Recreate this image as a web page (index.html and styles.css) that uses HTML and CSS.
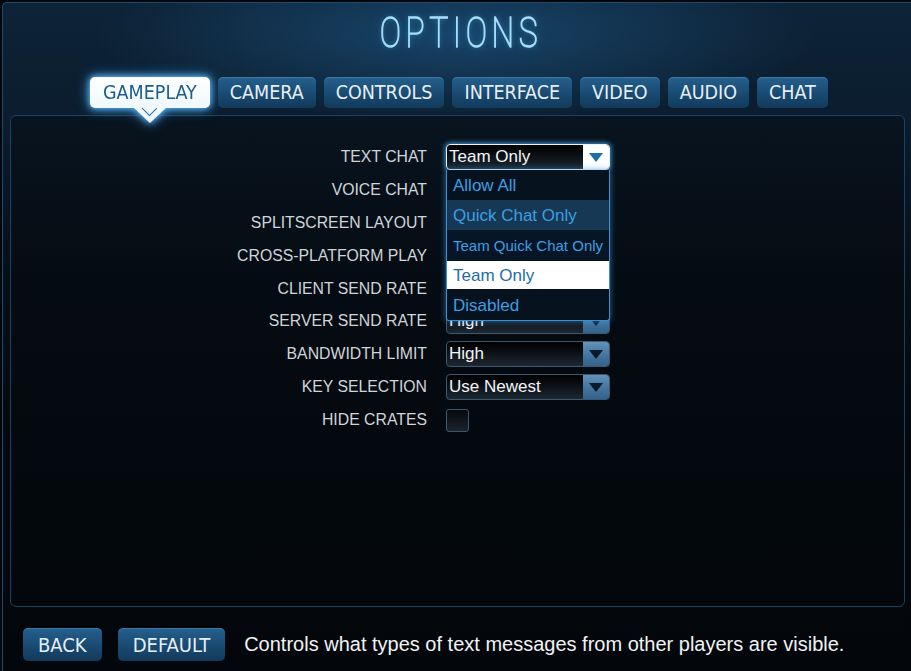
FILE: index.html
```html
<!DOCTYPE html>
<html>
<head>
<meta charset="utf-8">
<title>Options</title>
<link rel="stylesheet" href="styles.css">
</head>
<body>
<div class="frame">
  <header class="title"><h1>OPTIONS</h1></header>
  <nav class="tabs">
    <div class="tab active">GAMEPLAY</div>
    <div class="tab">CAMERA</div>
    <div class="tab">CONTROLS</div>
    <div class="tab">INTERFACE</div>
    <div class="tab">VIDEO</div>
    <div class="tab">AUDIO</div>
    <div class="tab">CHAT</div>
  </nav>
  <section class="panel">
    <div class="rows">
      <div class="row">
        <span class="label">TEXT CHAT</span>
        <div class="select open">
          <span class="val">Team Only</span><span class="arrow"></span>
          <ul class="dropdown">
            <li class="item">Allow All</li>
            <li class="item hover">Quick Chat Only</li>
            <li class="item small">Team Quick Chat Only</li>
            <li class="item selected">Team Only</li>
            <li class="item">Disabled</li>
          </ul>
        </div>
      </div>
      <div class="row"><span class="label">VOICE CHAT</span><div class="select"><span class="val"></span><span class="arrow"></span></div></div>
      <div class="row"><span class="label">SPLITSCREEN LAYOUT</span><div class="select"><span class="val"></span><span class="arrow"></span></div></div>
      <div class="row"><span class="label">CROSS-PLATFORM PLAY</span><div class="check"></div></div>
      <div class="row"><span class="label">CLIENT SEND RATE</span><div class="select"><span class="val"></span><span class="arrow"></span></div></div>
      <div class="row"><span class="label">SERVER SEND RATE</span><div class="select"><span class="val">High</span><span class="arrow"></span></div></div>
      <div class="row"><span class="label">BANDWIDTH LIMIT</span><div class="select"><span class="val">High</span><span class="arrow"></span></div></div>
      <div class="row"><span class="label">KEY SELECTION</span><div class="select"><span class="val">Use Newest</span><span class="arrow"></span></div></div>
      <div class="row"><span class="label">HIDE CRATES</span><div class="check"></div></div>
    </div>
  </section>
  <footer class="footer">
    <div class="btn">BACK</div>
    <div class="btn">DEFAULT</div>
    <p class="desc">Controls what types of text messages from other players are visible.</p>
  </footer>
</div>
</body>
</html>
```
FILE: styles.css
```css
html, body {
  margin: 0;
  padding: 0;
}
body {
  width: 911px;
  height: 671px;
  overflow: hidden;
  background: #03060a;
  font-family: "Liberation Sans", Arial, sans-serif;
}
.frame {
  margin: 2px 0 0 2px;
  height: 669px;
  box-sizing: border-box;
  border-top: 1px solid #1d4b70;
  border-left: 1px solid #1d4b70;
  border-top-left-radius: 5px;
  background:
    radial-gradient(ellipse 360px 90px at 50% 32px, rgba(34, 98, 150, 0.55), rgba(34, 98, 150, 0) 100%),
    linear-gradient(180deg, #0d2337 0px, #0b1d2e 110px, #060e17 280px, #04080d 450px, #03070b 669px);
  display: flex;
  flex-direction: column;
}
.title {
  height: 74px;
  box-sizing: border-box;
  padding: 9px 0 0 8px;
  display: flex;
  justify-content: center;
}
.title h1 {
  margin: 0;
  font-family: Roboto, "Liberation Sans", sans-serif;
  font-weight: 100;
  font-size: 42px;
  line-height: 42px;
  letter-spacing: 6px;
  color: #133c5c;
  -webkit-text-stroke: 1.3px #a6defa;
  text-shadow: 0 0 6px rgba(70, 175, 235, 0.9), 0 0 14px rgba(50, 150, 220, 0.6);
  transform: scaleX(0.76);
}
.tabs {
  display: flex;
  gap: 8px;
  padding-left: 87px;
  position: relative;
  z-index: 2;
}
.tab, .btn {
  height: 31px;
  box-sizing: border-box;
  padding: 0 12px;
  display: flex;
  align-items: center;
  border-radius: 5px;
  background: linear-gradient(180deg, #25608d 0%, #1a4c74 50%, #123a5c 100%);
  box-shadow: inset 0 1px 0 rgba(120, 180, 230, 0.3);
  color: #e8eff5;
  font-family: "DejaVu Sans Condensed", "DejaVu Sans", sans-serif;
  font-stretch: condensed;
  font-size: 19.5px;
  position: relative;
}
.tab.active {
  padding: 0 13px;
  background: linear-gradient(180deg, #ffffff 0%, #eef8ff 100%);
  color: #1b5d88;
  box-shadow: none;
  filter: drop-shadow(0 0 3px #6ac6ff) drop-shadow(0 0 6px rgba(60, 160, 240, 0.85));
}
.tab.active::after {
  content: "";
  position: absolute;
  left: 50%;
  top: 100%;
  margin-left: -17px;
  width: 34px;
  height: 16px;
  margin-top: -1px;
  background: #f2faff;
  clip-path: polygon(0 0, 100% 0, 50% 100%);
}
.tab.active::before {
  content: "";
  position: absolute;
  left: 50%;
  top: calc(100% - 5px);
  width: 10px;
  height: 10px;
  margin-left: -6px;
  border-right: 1.5px solid #2a6e9a;
  border-bottom: 1.5px solid #2a6e9a;
  transform: rotate(45deg);
  z-index: 1;
}
.panel {
  margin: 7px 0 0 7px;
  width: 895px;
  height: 492px;
  box-sizing: border-box;
  border: 1px solid #1b4262;
  border-radius: 6px;
  background: linear-gradient(180deg, #08141f 0%, #050b12 35%, #03070b 100%);
  padding-top: 28px;
  position: relative;
  z-index: 1;
}
.rows {
  display: flex;
  flex-direction: column;
  gap: 6.9px;
}
.row {
  display: flex;
  align-items: center;
  gap: 19px;
  height: 26px;
}
.label {
  width: 416px;
  text-align: right;
  color: #cfd5da;
  font-size: 15.8px;
  line-height: 24px;
}
.select {
  position: relative;
  width: 164px;
  height: 26px;
  box-sizing: border-box;
  border: 1px solid #3a5870;
  border-radius: 4px;
  background: linear-gradient(180deg, #000000 0%, #0d1319 50%, #1e2831 100%);
  display: flex;
  align-items: center;
}
.val {
  flex: 1;
  padding-left: 2px;
  color: #f3f5f7;
  font-size: 17px;
  line-height: 24px;
}
.arrow {
  width: 26px;
  height: 24px;
  border-radius: 0 3px 3px 0;
  background: linear-gradient(180deg, #6293bb 0%, #4677a0 50%, #33628a 100%);
  display: flex;
  align-items: center;
  justify-content: center;
}
.arrow::after {
  content: "";
  width: 0;
  height: 0;
  border-left: 7px solid transparent;
  border-right: 7px solid transparent;
  border-top: 9px solid #0b1a26;
  margin-top: 1px;
}
.select.open {
  border-color: #e4f4ff;
  box-shadow: 0 0 5px 1px rgba(70, 170, 240, 0.9);
  z-index: 3;
}
.select.open .arrow {
  background: #ffffff;
}
.select.open .arrow::after {
  border-top-color: #1b6fa8;
}
.dropdown {
  position: absolute;
  left: -1px;
  right: -1px;
  top: calc(100% + 1px);
  margin: 0;
  padding: 0;
  list-style: none;
  border: 1px solid #3b8fd0;
  border-top: none;
  border-radius: 0 0 3px 3px;
  background: #06121e;
  box-shadow: 0 0 6px rgba(60, 150, 230, 0.7);
}
.item {
  height: 30px;
  line-height: 31px;
  padding-left: 6px;
  color: #3c9fe4;
  font-size: 17px;
  white-space: nowrap;
}
.item.hover {
  background: #163854;
}
.item.small {
  font-size: 15px;
  background: #071626;
}
.item.selected {
  background: #ffffff;
  color: #1f6da3;
  height: 28px;
  line-height: 29px;
  margin: 1px 0;
}
.check {
  width: 23px;
  height: 23px;
  box-sizing: border-box;
  border: 1px solid #3a5870;
  border-radius: 3px;
  background: linear-gradient(180deg, #06090c 0%, #1b232b 100%);
}
.footer {
  margin-top: 21px;
  padding-left: 20px;
  display: flex;
  align-items: center;
}
.btn {
  height: 33px;
  font-size: 20px;
  padding: 0 15px;
  margin-right: 16px;
}
.desc {
  margin: 0 0 0 3px;
  color: #f0f2f4;
  font-size: 20px;
}
```
